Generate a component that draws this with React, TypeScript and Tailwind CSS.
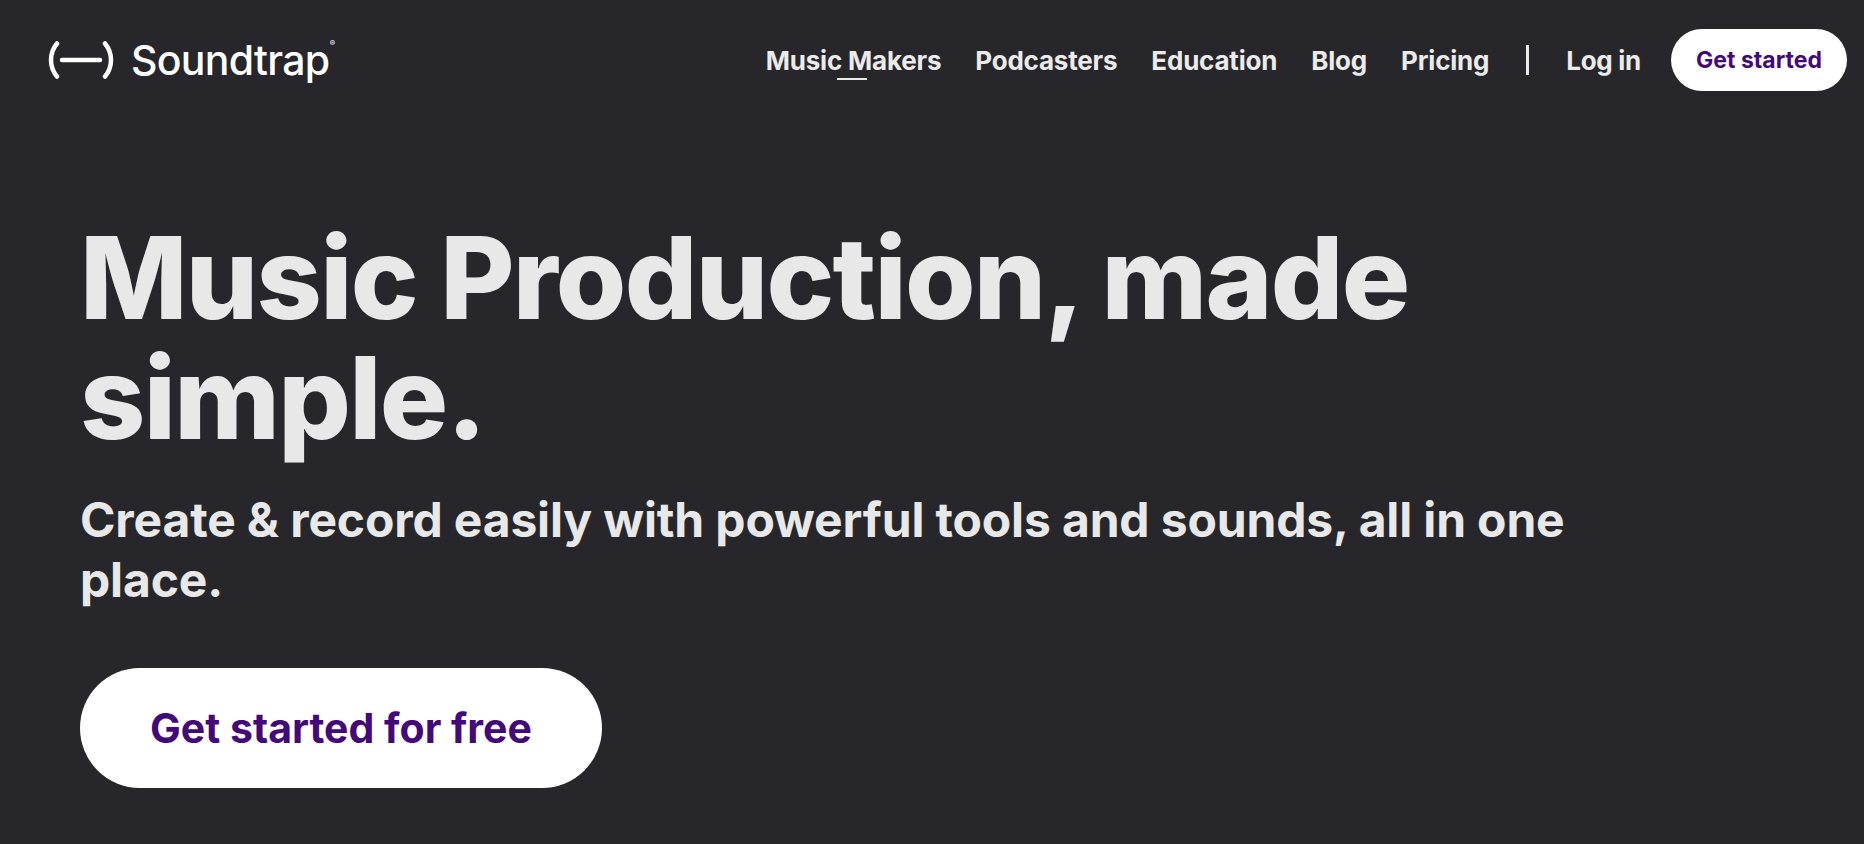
const font = "font-['Inter',sans-serif]";

function Logo() {
  return (
    <div className="flex items-center gap-[17px]">
      <svg width="66" height="38" viewBox="0 0 66 38" fill="none" stroke="#fff" strokeWidth="4.5" strokeLinecap="round">
        <path d="M9 2.5C1 12 1 26 9 35.5" />
        <path d="M57 2.5C65 12 65 26 57 35.5" />
        <path d="M14 19H52" />
      </svg>
      <div className="relative text-[41px] leading-[46px] font-medium tracking-[-0.7px] text-white">
        Soundtrap
        <span className="absolute right-[-5px] top-[2px] text-[8px] leading-none">®</span>
      </div>
    </div>
  );
}

const links = ['Music Makers', 'Podcasters', 'Education', 'Blog', 'Pricing'];

export default function App() {
  return (
    <div className={`h-[844px] overflow-hidden bg-[#27272b] ${font}`}>
      <header className="flex h-[120px] items-start justify-between pl-[48px] pr-[17px]">
        <div className="pt-[37px]">
          <Logo />
        </div>
        <nav className="flex items-center gap-[34px] pt-[29px] text-[26px] font-bold text-[#ebebeb]">
          {links.map((link) => (
            <a key={link} className="relative flex h-[62px] items-center whitespace-nowrap tracking-[-0.2px]">
              {link}
              {link === 'Music Makers' && <span className="absolute bottom-[11px] left-[71px] h-[2px] w-[30px] bg-[#ebebeb]" />}
            </a>
          ))}
          <div className="mx-[3px] h-[30px] w-[3px] bg-[#ebebeb]" />
          <a className="tracking-[-0.3px]">Log in</a>
          <a className="-ml-[4px] flex h-[62px] w-[176px] items-center justify-center rounded-full bg-white text-[23px] font-bold text-[#43097a]">
            Get started
          </a>
        </nav>
      </header>
      <main className="pl-[80px] pt-[98px]">
        <h1 className="w-[1500px] text-[114px] leading-[120px] font-extrabold tracking-[-1.7px] text-[#e8e8e8]">
          Music Production, made simple.
        </h1>
        <p className="mt-[32px] w-[1540px] text-[48px] leading-[60px] font-bold tracking-[-0.15px] text-[#e8e8e8]">
          Create &amp; record easily with powerful tools and sounds, all in one place.
        </p>
        <a className="mt-[58px] flex h-[120px] w-[522px] items-center justify-center rounded-full bg-white pt-[2px] text-[41px] font-bold text-[#43097a]">
          Get started for free
        </a>
      </main>
    </div>
  );
}
